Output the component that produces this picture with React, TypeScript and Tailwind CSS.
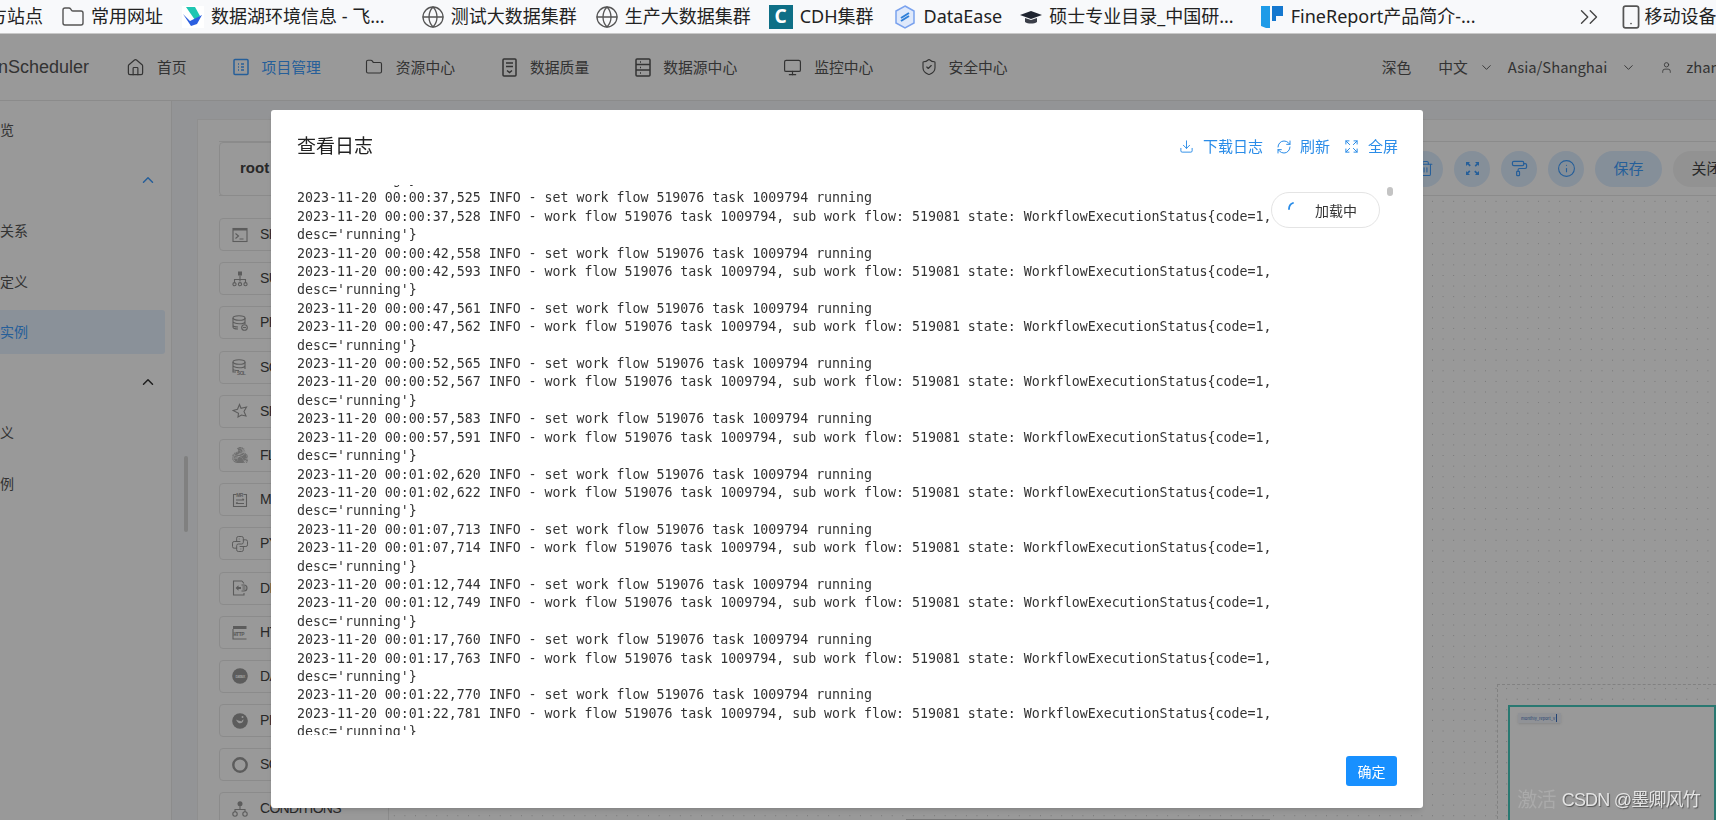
import React from 'react';
import {
  Home,
  Folder,
  Monitor,
  ShieldCheck,
  ChevronUp,
  ChevronDown,
  ChevronsRight,
  Globe,
  User,
  Download,
  RefreshCw,
  Expand,
  Trash2,
  Info,
  PaintRoller,
  Smartphone,
} from 'lucide-react';
import { SiApacheflink } from 'react-icons/si';
import { TbBrandPython } from 'react-icons/tb';

const mono = { fontFamily: '"DejaVu Sans Mono", monospace' };

const logTimes = [
  ['00:00:37,525', '00:00:37,528'],
  ['00:00:42,558', '00:00:42,593'],
  ['00:00:47,561', '00:00:47,562'],
  ['00:00:52,565', '00:00:52,567'],
  ['00:00:57,583', '00:00:57,591'],
  ['00:01:02,620', '00:01:02,622'],
  ['00:01:07,713', '00:01:07,714'],
  ['00:01:12,744', '00:01:12,749'],
  ['00:01:17,760', '00:01:17,763'],
  ['00:01:22,770', '00:01:22,781'],
];

const ProjectIcon = () => (
  <svg width="16" height="18" viewBox="0 0 16 18" fill="none" stroke="currentColor" strokeWidth="1.5" className="shrink-0">
    <rect x="1" y="1.500" width="14" height="15" rx="1" />
    <path d="M5 6h1M5 9h1M5 12h1M8 6h3M8 9h3M8 12h3" />
  </svg>
);

const QualityIcon = () => (
  <svg width="15" height="19" viewBox="0 0 15 19" fill="none" stroke="currentColor" strokeWidth="1.5" className="shrink-0">
    <rect x="1" y="1" width="13" height="17" rx="1" />
    <path d="M4 5h7M4 8.500h7M5 12.500l2.500 2 2.500-2" />
  </svg>
);

const SourceIcon = () => (
  <svg width="16" height="19" viewBox="0 0 16 19" fill="none" stroke="currentColor" strokeWidth="1.5" className="shrink-0">
    <rect x="1" y="1" width="14" height="17" rx="1" />
    <path d="M1 6.500h14M1 12h14M5 4h1M5 9.500h1M5 15h1" />
  </svg>
);

const FeishuIcon = () => (
  <svg width="22" height="22" viewBox="0 0 22 22">
    <rect width="22" height="22" fill="#fff" />
    <path d="M4 1h9l5 9-5 4z" fill="#1fc6b2" />
    <path d="M1 8l7 7 12-6-5 9-6 2z" fill="#2b5fe0" />
  </svg>
);

const CdhIcon = () => (
  <div className="flex h-6 w-6 items-center justify-center bg-[#0e6f86] text-[19px] font-bold text-white">C</div>
);

const DataEaseIcon = () => (
  <svg width="20" height="24" viewBox="0 0 20 24">
    <path d="M10 1l9 5v12l-9 5-9-5V6z" fill="#dfe9fb" stroke="#7aa2ee" strokeWidth="1.500" />
    <path d="M6 13l8-5M6 16l8-5" stroke="#2e7fd8" strokeWidth="2" />
  </svg>
);

const HatIcon = () => (
  <svg width="24" height="18" viewBox="0 0 24 18">
    <path d="M12 3l11 4-11 4L1 7z" fill="#1f2430" />
    <path d="M6 10v4c3 2 9 2 12 0v-4l-6 2z" fill="#3b3f49" />
  </svg>
);

const FineIcon = () => (
  <svg width="24" height="25" viewBox="0 0 24 25">
    <path d="M1 2h9v22H6l-5-2z" fill="#1e9be8" />
    <path d="M12 2h11v10h-7v5h-4z" fill="#1578cf" />
  </svg>
);

const FullscreenIcon = () => (
  <svg width="15" height="15" viewBox="0 0 15 15" fill="currentColor">
    <path d="M1 1h4L3.800 2.200l2 2-1.200 1.200-2-2L1 5zM14 1v4l-1.200-1.200-2 2-1.200-1.200 2-2L10 1zM1 14v-4l1.200 1.200 2-2 1.200 1.200-2 2L5 14zM14 14h-4l1.200-1.200-2-2 1.200-1.200 2 2L14 10z" />
  </svg>
);

// palette icons of the task list, all on a 16px box
const Mark = ({ name }: { name: string }) => {
  const line = { fill: 'none', stroke: 'currentColor', strokeWidth: 1.1 };
  return (
    <span className="flex h-4 w-4 shrink-0 items-center justify-center text-[#999]">
      {name === 'SHELL' && (
        <svg width="16" height="16" viewBox="0 0 16 16">
          <rect x="1" y="1.500" width="14" height="13" {...line} />
          <path d="M1 1.500h14v2H1z" fill="currentColor" />
          <path d="M3.500 6.500l3 2.500-3 2.500M7.500 12h4" {...line} />
        </svg>
      )}
      {name === 'SUB_PROCESS' && (
        <svg width="16" height="16" viewBox="0 0 16 16">
          <rect x="6" y="0.500" width="4" height="4" fill="currentColor" />
          <path d="M8 4.500v6M2.500 11.500V8.500h11v3" {...line} />
          <circle cx="2.500" cy="13.200" r="1.600" {...line} />
          <circle cx="8" cy="13.200" r="1.600" {...line} />
          <circle cx="13.500" cy="13.200" r="1.600" {...line} />
        </svg>
      )}
      {name === 'PROCEDURE' && (
        <svg width="16" height="16" viewBox="0 0 16 16">
          <ellipse cx="7" cy="3" rx="6" ry="2.300" {...line} />
          <path d="M1 3v9c0 1 2 2 5 2M13 3v6M1 6.500c0 1.200 3 2.300 6 2.300s6-1 6-2.300M1 10c0 1.200 2.500 2 5 2" {...line} />
          <circle cx="12.500" cy="12.500" r="2.800" {...line} />
          <path d="M11 12.500h3" {...line} />
        </svg>
      )}
      {name === 'SQL' && (
        <svg width="16" height="16" viewBox="0 0 16 16">
          <ellipse cx="7" cy="3" rx="6" ry="2.300" {...line} />
          <path d="M1 3v10h3M13 3v7M1 6.500c0 1.200 3 2.300 6 2.300s6-1 6-2.300M1 10c0 1 2.500 1.500 6 1.500" {...line} />
          <text x="5" y="15.500" fontSize="5" fontWeight="700" fill="currentColor" fontFamily="Liberation Sans">SQL</text>
        </svg>
      )}
      {name === 'SPARK' && (
        <svg width="16" height="16" viewBox="0 0 16 16">
          <path d="M7.500 1.500l1.500 3.800 5.500-1.300-2.500 4.500 2 4.500-4.500-1-3.500 2 .5-3.800L1 7.500l4.500-1.200z" {...line} />
        </svg>
      )}
      {name === 'FLINK' && <SiApacheflink size={16} className="opacity-70" />}
      {name === 'MR' && (
        <svg width="16" height="16" viewBox="0 0 16 16">
          <path d="M4.500 2.500H1.500v12h13v-12h-3" {...line} />
          <text x="4.200" y="5" fontSize="5" fontWeight="700" fill="currentColor" fontFamily="Liberation Sans">MR</text>
          <path d="M4 8h8M10.500 6.800L12 8M4 11.500h8M5.500 10.300L4 11.500" {...line} />
        </svg>
      )}
      {name === 'PYTHON' && <TbBrandPython size={20} strokeWidth={1.2} className="shrink-0" />}
      {name === 'DEPENDENT' && (
        <svg width="16" height="16" viewBox="0 0 16 16">
          <path d="M10 1H1.500v14H12v-2M10 1l2 2.500" {...line} />
          <path d="M3.500 8l3-2.800v1.800H9v2H6.500v1.800z" fill="currentColor" />
          <path d="M9.500 5H12a3 3 0 0 1 0 6H9.500" {...line} />
          <path d="M10.500 7h3M10.500 9h3" {...line} />
        </svg>
      )}
      {name === 'HTTP' && (
        <svg width="16" height="15" viewBox="0 0 16 15">
          <path d="M1 1h13.500v3H1z" fill="currentColor" />
          <path d="M1 4v10h13.500" {...line} />
          <text x="1.200" y="11" fontSize="5.600" fontWeight="700" fill="currentColor" fontFamily="Liberation Mono">HTTP</text>
        </svg>
      )}
      {name === 'DATAX' && (
        <svg width="16" height="16" viewBox="0 0 16 16">
          <circle cx="8" cy="8" r="7.800" fill="currentColor" />
          <text x="8" y="9.500" fontSize="3.800" fontWeight="700" fill="#fff" textAnchor="middle" fontFamily="Liberation Sans">DATAX</text>
        </svg>
      )}
      {name === 'PIGEON' && (
        <svg width="16" height="16" viewBox="0 0 16 16">
          <circle cx="8" cy="8" r="7.800" fill="currentColor" />
          <path d="M4 6.500c1 3 3 3.800 4 3.800 2 0 3.500-1.500 3.500-4-1 .5-1.500 1.200-2 2.200C8 8 6 7.500 4 6.500z" fill="#fff" />
          <circle cx="10.500" cy="4" r="1" fill="#fff" />
        </svg>
      )}
      {name === 'SQOOP' && (
        <svg width="16" height="16" viewBox="0 0 16 16">
          <circle cx="8" cy="8" r="6.700" fill="none" stroke="currentColor" strokeWidth="2.400" />
        </svg>
      )}
      {name === 'CONDITIONS' && (
        <svg width="16" height="16" viewBox="0 0 16 16">
          <circle cx="8" cy="2.800" r="2.500" fill="currentColor" />
          <path d="M8 5v3.500M3 11V8.500h10V11" {...line} />
          <circle cx="3" cy="13" r="2.200" {...line} />
          <circle cx="13" cy="13" r="2.200" {...line} />
        </svg>
      )}
    </span>
  );
};

const navItems = [
  { label: '首页', icon: <Home size={19} strokeWidth={1.5} className="shrink-0" />, gap: 'ml-[126px]', text: 'ml-[12px]' },
  { label: '项目管理', icon: <ProjectIcon />, gap: 'ml-[46px]', text: 'ml-[13px]', active: true },
  { label: '资源中心', icon: <Folder size={18} strokeWidth={1.5} className="shrink-0" />, gap: 'ml-[44px]', text: 'ml-[13px]' },
  { label: '数据质量', icon: <QualityIcon />, gap: 'ml-[47px]', text: 'ml-[13px]' },
  { label: '数据源中心', icon: <SourceIcon />, gap: 'ml-[46px]', text: 'ml-[12px]' },
  { label: '监控中心', icon: <Monitor size={19} strokeWidth={1.5} className="shrink-0" />, gap: 'ml-[46px]', text: 'ml-[12px]' },
  { label: '安全中心', icon: <ShieldCheck size={18} strokeWidth={1.5} className="shrink-0" />, gap: 'ml-[47px]', text: 'ml-[10px]' },
];

const sideItems = [
  { label: '项目概览' },
  { label: '工作流', open: 'text-[#409eff]' },
  { label: '工作流关系' },
  { label: '工作流定义' },
  { label: '工作流实例', active: true },
  { label: '任务', open: 'text-[#333]' },
  { label: '任务定义' },
  { label: '任务实例' },
];

const taskCards = [
  'SHELL', 'SUB_PROCESS', 'PROCEDURE', 'SQL', 'SPARK', 'FLINK', 'MR',
  'PYTHON', 'DEPENDENT', 'HTTP', 'DATAX', 'PIGEON', 'SQOOP', 'CONDITIONS',
];

function BookmarksBar() {
  return (
    <div
      className="flex h-[34px] shrink-0 items-center overflow-hidden whitespace-nowrap border-b border-[#c8c8c8] bg-[#f8f9fb] text-[18px] text-[#222]"
      style={{ fontFamily: '"Noto Sans", "Noto Sans CJK SC", sans-serif' }}
    >
      <span className="ml-[-29px] shrink-0">官方站点</span>
      <Folder size={24} strokeWidth={1.4} className="ml-[18px] shrink-0 text-[#555]" />
      <span className="ml-[6px] shrink-0">常用网址</span>
      <span className="ml-[19px] flex shrink-0"><FeishuIcon /></span>
      <span className="ml-[7px] shrink-0">数据湖环境信息 - 飞...</span>
      <Globe size={24} strokeWidth={1.3} className="ml-[36px] shrink-0 text-[#555]" />
      <span className="ml-[6px] shrink-0">测试大数据集群</span>
      <Globe size={24} strokeWidth={1.3} className="ml-[18px] shrink-0 text-[#555]" />
      <span className="ml-[6px] shrink-0">生产大数据集群</span>
      <span className="ml-[18px] shrink-0"><CdhIcon /></span>
      <span className="ml-[7px] shrink-0">CDH集群</span>
      <span className="ml-[21px] flex shrink-0"><DataEaseIcon /></span>
      <span className="ml-[9px] shrink-0">DataEase</span>
      <span className="ml-[17px] flex shrink-0"><HatIcon /></span>
      <span className="ml-[6px] shrink-0">硕士专业目录_中国研...</span>
      <span className="ml-[26px] flex shrink-0"><FineIcon /></span>
      <span className="ml-[7px] shrink-0">FineReport产品简介-...</span>
      <ChevronsRight size={30} strokeWidth={1.1} className="ml-[99px] shrink-0 text-[#444]" />
      <Smartphone size={26} strokeWidth={1.6} className="ml-[14px] shrink-0 text-[#555]" />
      <span className="shrink-0">移动设备</span>
    </div>
  );
}

function TopNav() {
  return (
    <div className="flex h-[67px] shrink-0 items-center overflow-hidden whitespace-nowrap border-b border-[#e8e8e8] bg-white text-[14.8px] text-[#555]">
      <span className="w-0 shrink-0 text-[18px] text-[#555]" style={{ fontFamily: '"Liberation Sans", sans-serif' }}>
        <span className="ml-[-53px]">DolphinScheduler</span>
      </span>
      {navItems.map((item) => (
        <div key={item.label} className={`flex shrink-0 items-center ${item.gap} ${item.active ? 'text-[#409eff]' : ''}`}>
          {item.icon}
          <span className={item.text}>{item.label}</span>
        </div>
      ))}
      <span className="ml-[374px] shrink-0">深色</span>
      <span className="ml-[27px] shrink-0">中文</span>
      <ChevronDown size={15} strokeWidth={1.5} className="ml-[11px] shrink-0" />
      <span className="ml-[14px] shrink-0">Asia/Shanghai</span>
      <ChevronDown size={15} strokeWidth={1.5} className="ml-[14px] shrink-0" />
      <User size={13} strokeWidth={1.5} className="ml-[24px] shrink-0" />
      <span className="ml-[13px] shrink-0">zhangsan</span>
    </div>
  );
}

function Sidebar() {
  return (
    <div className="w-[172px] shrink-0 overflow-hidden border-r border-[#eaeaea] bg-white pr-[6px] pt-[6.5px] text-[14px] text-[#555]">
      {sideItems.map((item) => (
        <div
          key={item.label}
          className={`mb-[6.5px] flex h-[44px] items-center justify-between whitespace-nowrap rounded-r-[3px] pr-[8px] ${item.active ? 'bg-[#e6f2ff] text-[#409eff]' : ''}`}
        >
          <span className="ml-[-42px]">{item.label}</span>
          {item.open && <ChevronUp size={18} className={item.open} />}
        </div>
      ))}
    </div>
  );
}

function ToolButton({ children }: { children: React.ReactNode }) {
  return (
    <span className="flex h-9 w-9 shrink-0 items-center justify-center rounded-full bg-[#deeeff] text-[#409eff]">{children}</span>
  );
}

function Editor() {
  return (
    <div className="mt-[18px] flex min-w-0 flex-1 flex-col border-l border-t border-[#eee] bg-white pl-[21px] pt-[21px]">
      <div className="flex h-[55px] shrink-0 items-center justify-between border-y border-[#e8e8e8]">
        <div className="flex h-[54px] w-[260px] items-center rounded-[4px] border border-[#e8e8e8] pl-[20px] text-[15px] font-bold text-[#444]" style={{ fontFamily: '"Liberation Sans", sans-serif' }}>
          root
        </div>
        <div className="mr-[-24px] flex items-center gap-[11px] text-[15px]">
          <ToolButton><Trash2 size={17} strokeWidth={1.5} /></ToolButton>
          <ToolButton><FullscreenIcon /></ToolButton>
          <ToolButton><PaintRoller size={17} strokeWidth={1.7} /></ToolButton>
          <ToolButton><Info size={19} strokeWidth={1.4} /></ToolButton>
          <span className="flex h-9 w-[67px] shrink-0 items-center justify-center rounded-full bg-[#deeeff] text-[#409eff]">保存</span>
          <span className="flex h-9 w-[67px] shrink-0 items-center justify-center rounded-full bg-[#f4f4f4] text-[#444]">关闭</span>
        </div>
      </div>
      <div className="relative flex min-h-0 flex-1 overflow-hidden">
        <div className="flex w-[170px] shrink-0 flex-col gap-[11.2px] pt-[22px]">
          {taskCards.map((name) => (
            <div
              key={name}
              className="flex h-[33px] shrink-0 items-center gap-[12px] rounded-[4px] border border-[#e8e8e8] pl-[12px] text-[14px] tracking-[-0.7px] text-[#444]"
              style={{ fontFamily: '"Liberation Sans", sans-serif' }}
            >
              <Mark name={name} />
              {name}
            </div>
          ))}
        </div>
        <div className="min-w-0 flex-1 bg-[radial-gradient(#c8c8c8_0.6px,transparent_0.7px)] bg-[size:10.6px_10.6px]" />
        {/* canvas guide and minimap */}
        <div className="absolute right-0 top-[488px] h-[140px] w-[219px] border-l border-t border-dashed border-[#d8d8d8]" />
        <div className="absolute right-0 top-[509px] h-[200px] w-[208px] border-2 border-[#45c8bc] bg-white">
          <div className="ml-[8px] mt-[6px] flex h-[10px] w-[43px] items-center overflow-hidden whitespace-nowrap bg-[#f0f3fa] pl-[3px] text-[4px] text-[#3a6fc0] shadow-sm">
            monthly_report_v
            <span className="ml-[1px] h-[8px] w-[1px] shrink-0 bg-[#3a6fc0]" />
          </div>
        </div>
      </div>
    </div>
  );
}

function LogModal() {
  return (
    <div className="fixed inset-x-0 bottom-0 top-[34px] z-10 bg-black/40">
      <div className="absolute left-[271px] top-[76px] flex h-[698px] w-[1152px] flex-col rounded-[3px] bg-white shadow-md">
        <div className="flex h-[75px] shrink-0 items-center justify-between pb-[2px] pl-[26px] pr-[25px]">
          <span className="mt-[-2px] text-[19px] text-[#222]">查看日志</span>
          <div className="flex items-center text-[15px] text-[#2a8ce8]">
            <Download size={15} strokeWidth={1.5} />
            <span className="ml-[9px]">下载日志</span>
            <RefreshCw size={16} strokeWidth={1.5} className="ml-[13px]" />
            <span className="ml-[8px]">刷新</span>
            <Expand size={15} strokeWidth={1.6} className="ml-[14px]" />
            <span className="ml-[9px]">全屏</span>
          </div>
        </div>
        <div className="relative ml-[26px] h-[550px] overflow-hidden whitespace-pre text-[13.28px] leading-[18.4px] text-[#333]" style={mono}>
          <div className="mt-[-14px]">
            <div>desc='running'{'}'}</div>
            {logTimes.map(([a, b]) => (
              <React.Fragment key={a}>
                <div>{`2023-11-20 ${a} INFO - set work flow 519076 task 1009794 running`}</div>
                <div>{`2023-11-20 ${b} INFO - work flow 519076 task 1009794, sub work flow: 519081 state: WorkflowExecutionStatus{code=1,`}</div>
                <div>desc='running'{'}'}</div>
              </React.Fragment>
            ))}
          </div>
        </div>
        {/* loading pill + scroll thumb sit over the log */}
        <div className="absolute left-[1000px] top-[82px] flex h-9 w-[109px] items-center rounded-full border border-[#e4e4e4] bg-white text-[14px] text-[#333]">
          <svg width="14" height="14" viewBox="0 0 14 14" fill="none" className="ml-[15px] mt-[-6px]">
            <path d="M2 9c0-3 1.500-5 4-6" stroke="#2a8ce8" strokeWidth="1.800" strokeLinecap="round" />
          </svg>
          <span className="ml-[14px]">加载中</span>
        </div>
        <div className="absolute left-[1116px] top-[77px] h-[9px] w-[6px] rounded-full bg-[#c4c4c4]" />
        <div className="mt-[21px] flex justify-end pr-[26px]">
          <button className="h-[30px] w-[51px] rounded-[3px] bg-[#1890ff] text-[14px] text-white">确定</button>
        </div>
      </div>
    </div>
  );
}

export default function App() {
  return (
    <div className="relative flex h-[820px] w-[1716px] flex-col overflow-hidden" style={{ fontFamily: '"Noto Sans CJK SC", "Noto Sans", sans-serif' }}>
      <BookmarksBar />
      <TopNav />
      <div className="flex min-h-0 flex-1 bg-[#f5f7fa]">
        <Sidebar />
        <div className="w-[25px] shrink-0" />
        <Editor />
      </div>
      {/* scroll thumbs */}
      <div className="absolute left-[184px] top-[456px] z-20 h-[76px] w-[4px] rounded-full bg-[#808080]" />
      <div className="absolute bottom-0 left-[906px] z-20 h-[1px] w-[364px] bg-[#777]" />
      <LogModal />
      {/* CSDN watermark from the screenshot */}
      <div className="absolute bottom-[5px] right-[16px] z-20 flex items-center text-[18px] tracking-[-0.8px] text-[#e4e4e4] [text-shadow:1px_1px_1px_#555]" style={{ fontFamily: '"Liberation Sans", "Noto Sans CJK SC", sans-serif' }}>
        <span className="mr-[6px] text-[20px] text-[#aaa] [text-shadow:none]">激活</span>
        CSDN @墨卿风竹
      </div>
    </div>
  );
}
